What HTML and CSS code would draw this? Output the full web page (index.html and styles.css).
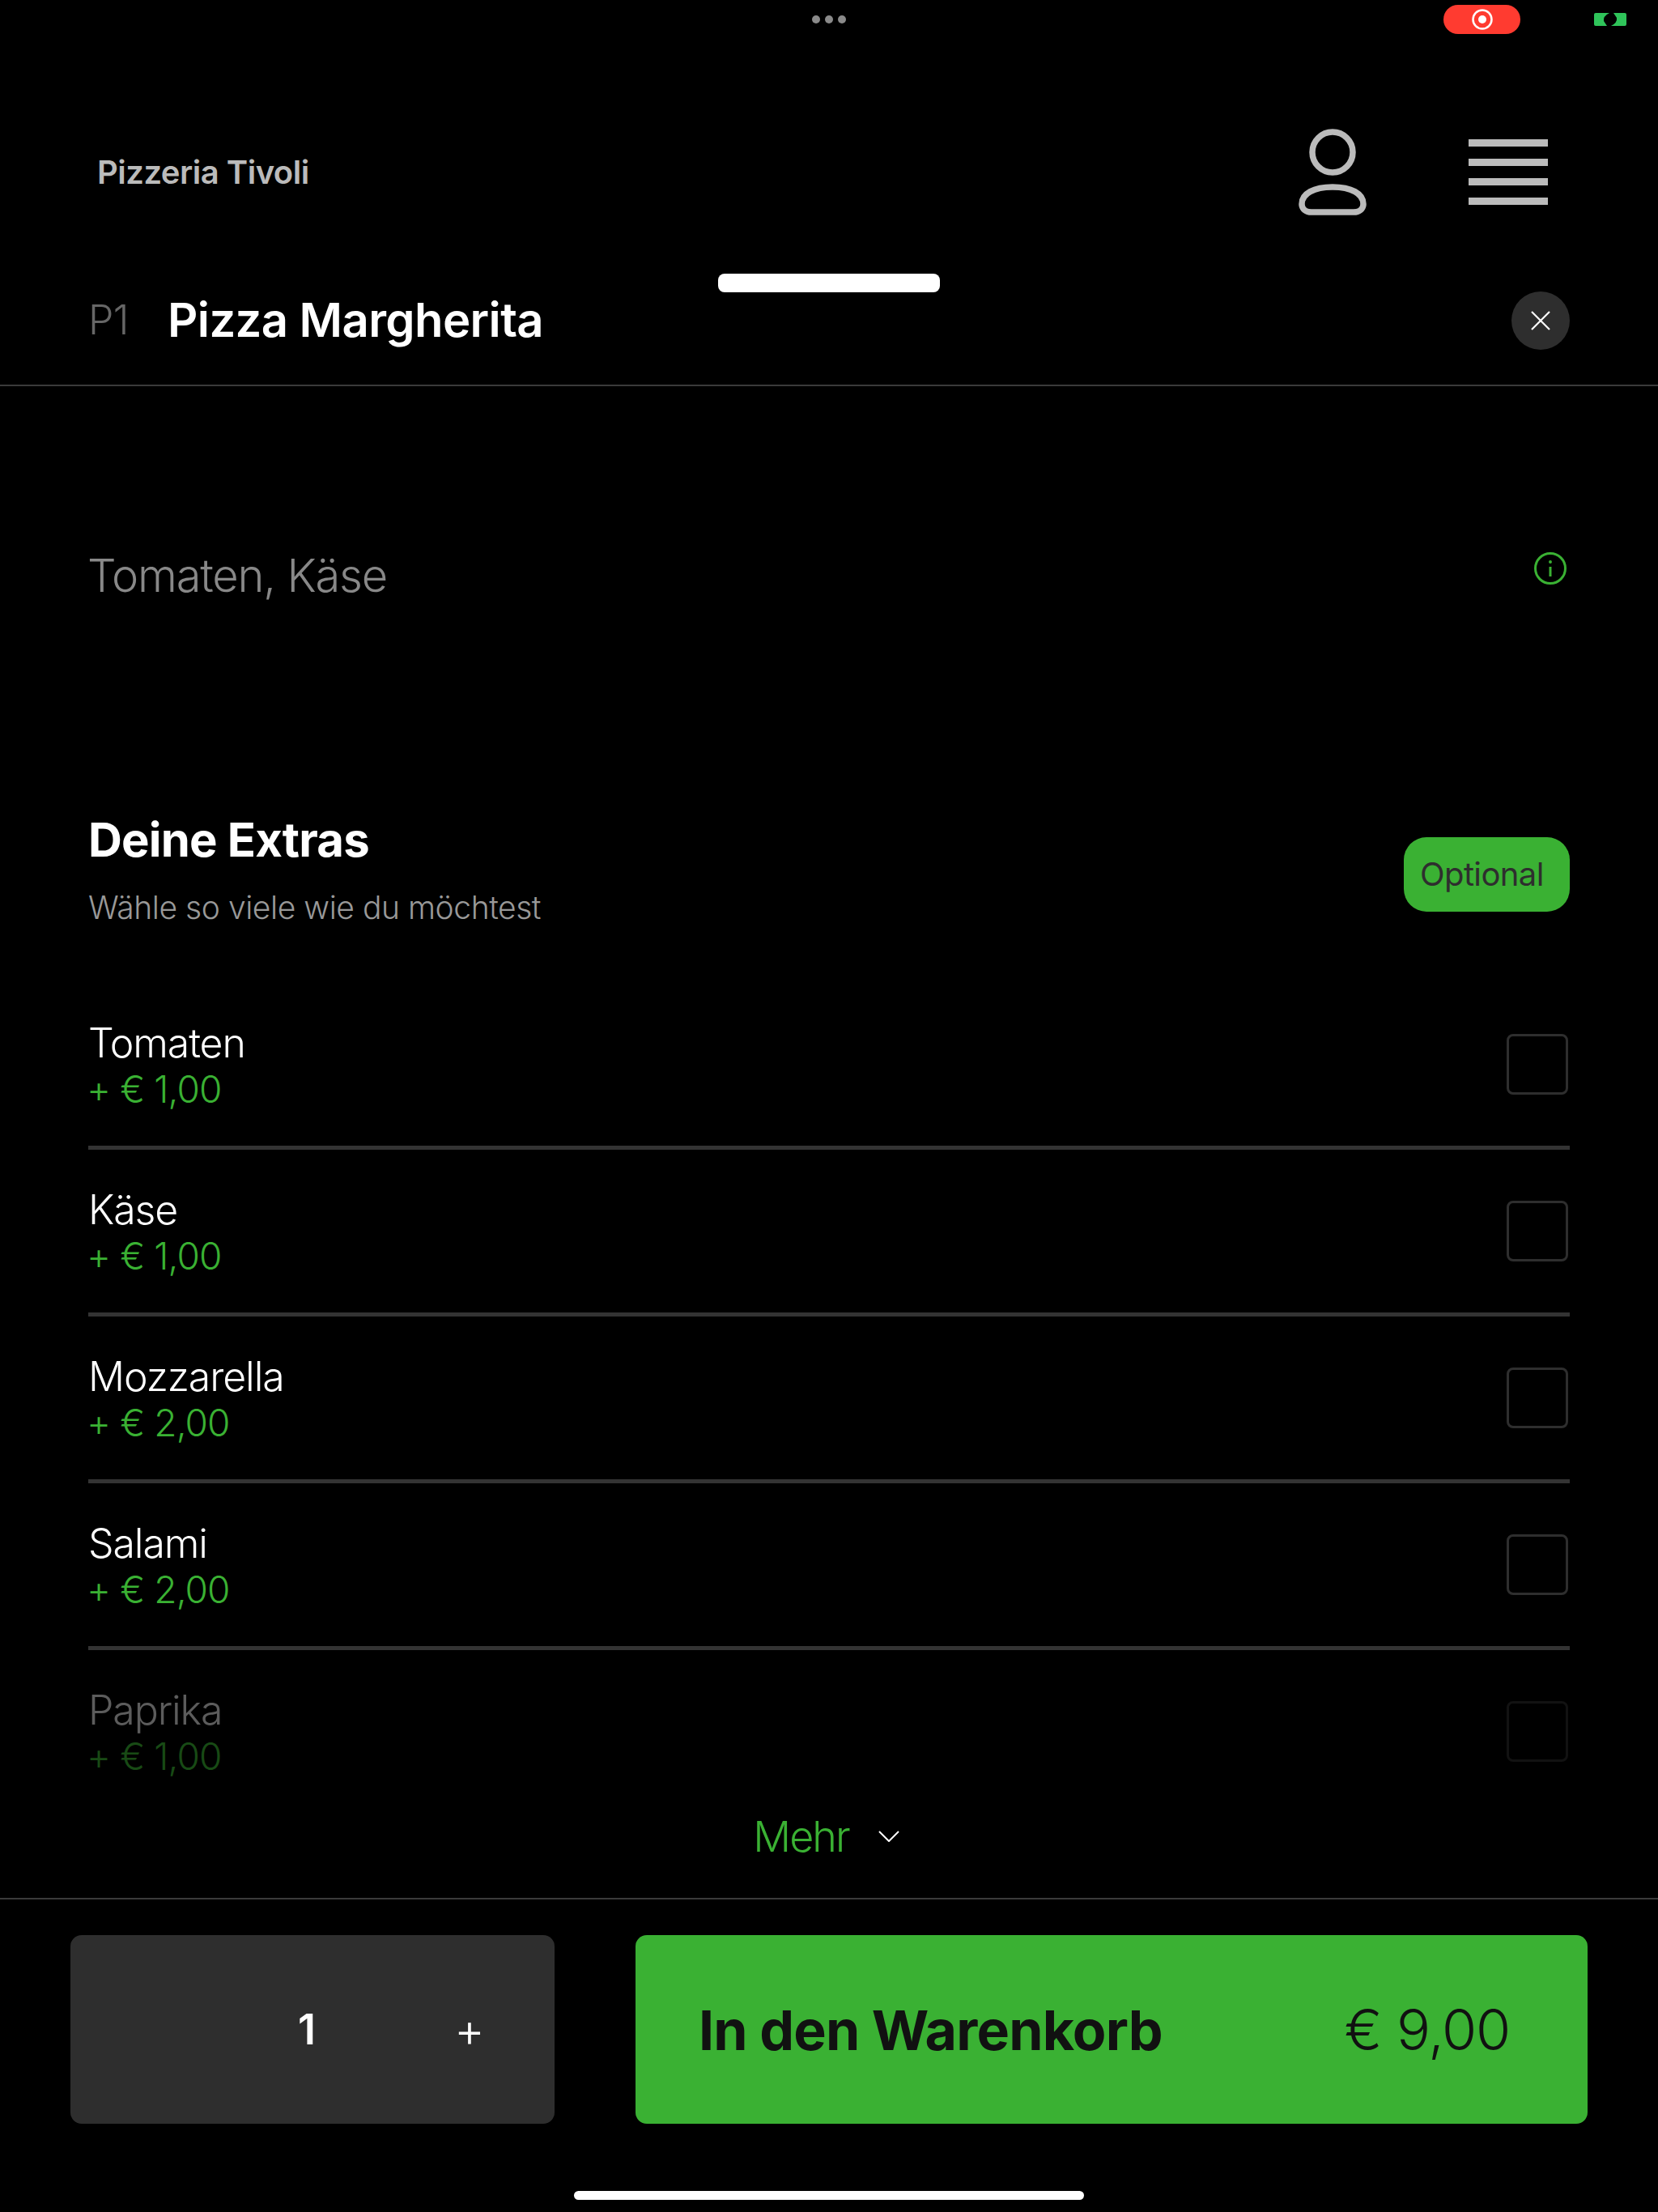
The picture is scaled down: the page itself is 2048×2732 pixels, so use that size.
FILE: index.html
```html
<!DOCTYPE html>
<html lang="de">
<head>
    <meta charset="UTF-8">
    <meta name="viewport" content="width=device-width, initial-scale=1.0">
    <title>Pizzeria Tivoli</title>
    <link rel="stylesheet" href="styles.css">
</head>
<body>
    <div class="status-bar">
        <div class="status-dots"><span></span><span></span><span></span></div>
        <div class="status-right">
            <div class="record-pill">
                <svg width="26" height="26" viewBox="0 0 26 26"><circle cx="13" cy="13" r="11.5" fill="none" stroke="#fff" stroke-width="2.5"/><circle cx="13" cy="13" r="5" fill="#fff"/></svg>
            </div>
            <svg class="cam-icon" width="40" height="16" viewBox="0 0 40 16"><path fill="#2fc45a" d="M2 0H19Q11 4 12 10L16 16H2Q0 16 0 14V2Q0 0 2 0ZM24 0H38Q40 0 40 2V14Q40 16 38 16H21Q29 12 28 6Z"/></svg>
        </div>
    </div>

    <header class="top-bar">
        <div class="shop-name">Pizzeria Tivoli</div>
        <div class="top-icons">
            <svg width="84" height="107" viewBox="0 0 84 107" fill="none" stroke="#bbb" stroke-width="7.5"><circle cx="42" cy="29" r="25"/><path d="M16 103h52c7 0 12-4 12-10 0-13-15-21-38-21S4 80 4 93c0 6 5 10 12 10z"/></svg>
            <div class="menu-icon"><span></span><span></span><span></span><span></span></div>
        </div>
    </header>

    <main class="sheet">
        <div class="sheet-handle"></div>

        <div class="sheet-head">
            <span class="item-code">P1</span>
            <h1 class="item-title">Pizza Margherita</h1>
            <button class="close-btn">
                <svg width="24" height="24" viewBox="0 0 24 24" stroke="#fff" stroke-width="2.2"><path d="M1 1L23 23M23 1L1 23"/></svg>
            </button>
        </div>

        <div class="description">
            <p>Tomaten, Käse</p>
            <svg class="info-icon" width="40" height="40" viewBox="0 0 40 40" fill="none" stroke="#3ab133" stroke-width="3"><circle cx="20" cy="20" r="18.5"/><path d="M20 18V30"/><circle cx="20" cy="12" r="1.2" fill="#3ab133" stroke-width="1.5"/></svg>
        </div>

        <section class="extras-head">
            <div>
                <h2>Deine Extras</h2>
                <p>Wähle so viele wie du möchtest</p>
            </div>
            <span class="badge">Optional</span>
        </section>

        <ul class="extras-list">
            <li class="extra">
                <div><div class="extra-name">Tomaten</div><div class="extra-price">+ € 1,00</div></div>
                <span class="checkbox"></span>
            </li>
            <li class="extra">
                <div><div class="extra-name">Käse</div><div class="extra-price">+ € 1,00</div></div>
                <span class="checkbox"></span>
            </li>
            <li class="extra">
                <div><div class="extra-name">Mozzarella</div><div class="extra-price">+ € 2,00</div></div>
                <span class="checkbox"></span>
            </li>
            <li class="extra">
                <div><div class="extra-name">Salami</div><div class="extra-price">+ € 2,00</div></div>
                <span class="checkbox"></span>
            </li>
            <li class="extra faded">
                <div><div class="extra-name">Paprika</div><div class="extra-price">+ € 1,00</div></div>
                <span class="checkbox"></span>
            </li>
        </ul>

        <div class="more-row">
            <span>Mehr</span>
            <svg width="26" height="14" viewBox="0 0 26 14" fill="none" stroke="#fff" stroke-width="2"><path d="M1 1L13 13L25 1"/></svg>
        </div>

        <div class="order-bar">
            <div class="qty">
                <span class="qty-value">1</span>
                <span class="qty-plus">+</span>
            </div>
            <button class="add-btn">
                <span class="add-label">In den Warenkorb</span>
                <span class="add-price">€ 9,00</span>
            </button>
        </div>

        <div class="home-bar"></div>
    </main>
</body>
</html>
```

FILE: styles.css
```css
* {
    box-sizing: border-box;
}
body {
    margin: 0;
    height: 2732px;
    overflow: hidden;
    background-color: #000;
    color: #fff;
    font-family: Inter, "Noto Sans", sans-serif;
}
h1, h2, p, ul {
    margin: 0;
    padding: 0;
}

.status-bar {
    height: 47px;
    padding-top: 6px;
    display: grid;
    grid-template-columns: 1fr auto 1fr;
}
.status-dots {
    grid-column: 2;
    height: 36px;
    display: flex;
    align-items: center;
    gap: 6px;
}
.status-dots span {
    width: 10px;
    height: 10px;
    border-radius: 50%;
    background-color: #8a8a8a;
}
.status-right {
    grid-column: 3;
    padding-right: 39px;
    display: flex;
    justify-content: flex-end;
    align-items: center;
    gap: 91px;
    height: 36px;
}
.record-pill {
    width: 95px;
    height: 36px;
    border-radius: 18px;
    background-color: #ff3b30;
    display: flex;
    align-items: center;
    justify-content: center;
}

.top-bar {
    height: 256px;
    margin-top: 37px;
    padding: 0 136px 0 120px;
    display: flex;
    justify-content: space-between;
    align-items: center;
}
.shop-name {
    font-size: 40px;
    font-weight: 600;
    color: #bbb;
    letter-spacing: -0.5px;
}
.top-icons {
    display: flex;
    align-items: center;
    gap: 126px;
}
.menu-icon {
    width: 98px;
    display: flex;
    flex-direction: column;
    gap: 15px;
}
.menu-icon span {
    height: 9px;
    background-color: #bbb;
}

.sheet {
    position: relative;
}
.sheet-handle {
    position: absolute;
    top: -2px;
    left: 887px;
    width: 274px;
    height: 23px;
    border-radius: 8px;
    background-color: #fff;
}
.sheet-head {
    height: 137px;
    padding: 0 109px 23px 109px;
    display: flex;
    align-items: center;
    border-bottom: 2px solid #3a3a3a;
}
.item-code {
    width: 98px;
    margin-top: -3px;
    font-size: 50px;
    font-weight: 350;
    color: #666;
    letter-spacing: -0.6px;
}
.item-title {
    flex: 1;
    margin-top: -3px;
    font-size: 58px;
    font-weight: 600;
    letter-spacing: -0.6px;
}
.close-btn {
    width: 72px;
    height: 72px;
    padding: 0;
    border: none;
    border-radius: 50%;
    background-color: #2e2e2e;
    display: flex;
    align-items: center;
    justify-content: center;
}

.description {
    height: 468px;
    padding: 0 113px 0 108px;
    display: flex;
    justify-content: space-between;
    align-items: center;
    color: #888;
    font-size: 56px;
    font-weight: 350;
    letter-spacing: -1.2px;
}
.info-icon {
    margin-top: -18px;
}

.extras-head {
    height: 212px;
    margin-top: 57px;
    padding: 0 109px;
    display: flex;
    justify-content: space-between;
    align-items: flex-start;
}
.extras-head h2 {
    font-size: 58px;
    font-weight: 700;
    line-height: 70px;
    letter-spacing: -0.8px;
}
.extras-head p {
    margin-top: 25px;
    font-size: 39px;
    font-weight: 350;
    color: #999;
    letter-spacing: -0.45px;
}
.badge {
    margin-top: 32px;
    width: 205px;
    height: 92px;
    padding-left: 20px;
    border-radius: 28px;
    background-color: #3ab133;
    color: #2e2e2e;
    font-size: 40px;
    line-height: 92px;
    letter-spacing: -0.6px;
}

.extras-list {
    list-style-type: none;
    margin: 0 109px;
}
.extra {
    height: 206px;
    padding-right: 2px;
    display: flex;
    justify-content: space-between;
    align-items: center;
    border-bottom: 5px solid #333;
}
.extra.faded {
    border-bottom-color: transparent;
}
.extra.faded .extra-name {
    opacity: 0.36;
}
.extra.faded .extra-price {
    opacity: 0.42;
}
.extra.faded .checkbox {
    opacity: 0.4;
}
.extra-name {
    font-size: 50px;
    font-weight: 350;
    line-height: 60px;
    letter-spacing: -1.1px;
}
.extra-price {
    margin-left: -2px;
    font-size: 46px;
    font-weight: 350;
    color: #3ab133;
    line-height: 54px;
    letter-spacing: -0.9px;
}
.checkbox {
    width: 76px;
    height: 75px;
    border: 3px solid #2e2e2e;
    border-radius: 8px;
}

.more-row {
    height: 102px;
    padding: 0 7px 52px 0;
    display: flex;
    justify-content: center;
    align-items: center;
    gap: 36px;
    border-bottom: 2px solid #3a3a3a;
    color: #3ab133;
    font-size: 52px;
    font-weight: 350;
    letter-spacing: -2px;
}

.order-bar {
    margin-top: 44px;
    padding: 0 87px;
    display: flex;
    gap: 100px;
}
.qty {
    width: 598px;
    height: 233px;
    padding-left: 281px;
    border-radius: 14px;
    background-color: #2e2e2e;
    display: flex;
    align-items: center;
    gap: 171px;
    font-size: 52px;
}
.qty-value {
    font-weight: 600;
}
.qty-plus {
    font-size: 58px;
    font-weight: 350;
}
.add-btn {
    flex: 1;
    height: 233px;
    padding: 0 96px 0 78px;
    border: none;
    border-radius: 14px;
    background-color: #3ab133;
    color: #111;
    display: flex;
    justify-content: space-between;
    align-items: center;
    font-family: inherit;
    font-size: 68px;
}
.add-label {
    font-weight: 700;
    letter-spacing: -0.8px;
}
.add-price {
    font-size: 70px;
    font-weight: 350;
    letter-spacing: -1.2px;
}
.home-bar {
    width: 630px;
    height: 11px;
    margin: 83px auto 0;
    border-radius: 6px;
    background-color: #fff;
}
```
